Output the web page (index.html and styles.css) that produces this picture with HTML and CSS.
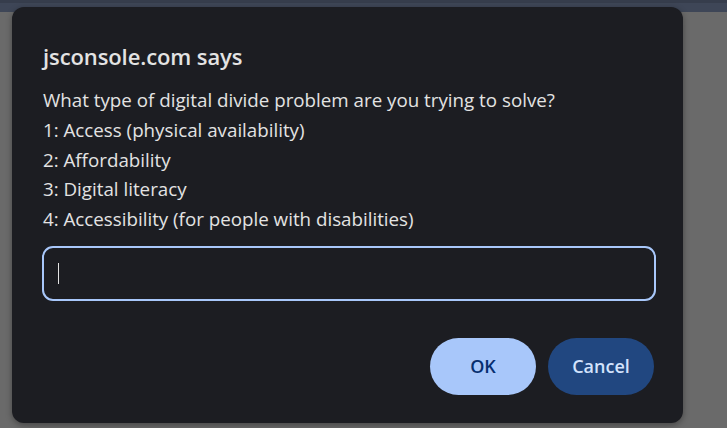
FILE: index.html
```html
<!DOCTYPE html>
<html>
<head>
<meta charset="utf-8">
<link rel="stylesheet" href="styles.css">
</head>
<body>
<div class="topbar"></div>
<div class="stage">
  <div class="dialog">
    <div class="title">jsconsole.com says</div>
    <div class="message">
      <div class="line">What type of digital divide problem are you trying to solve?</div>
      <div class="line">1: Access (physical availability)</div>
      <div class="line">2: Affordability</div>
      <div class="line">3: Digital literacy</div>
      <div class="line">4: Accessibility (for people with disabilities)</div>
    </div>
    <div class="field"><span class="caret"></span></div>
    <div class="actions">
      <button class="btn ok">OK</button>
      <button class="btn cancel">Cancel</button>
    </div>
  </div>
</div>
</body>
</html>
```
FILE: styles.css
```css
html, body {
  margin: 0;
  padding: 0;
}
body {
  width: 727px;
  height: 428px;
  background: #6a6a6a;
  overflow: hidden;
  font-family: "Open Sans", "Noto Sans", sans-serif;
  color: #e3e3e3;
  position: relative;
}
.topbar {
  height: 12px;
  background: #3e4657;
  border-top: 3px solid #363d4c;
  box-sizing: border-box;
}
.stage {
  position: absolute;
  left: 12px;
  top: 7px;
}
.dialog {
  width: 671px;
  height: 416px;
  box-sizing: border-box;
  background: #1c1d22;
  border-radius: 12px;
  box-shadow: 0 2px 6px rgba(0,0,0,0.35);
  padding: 34px 28px 0 31px;
  display: flex;
  flex-direction: column;
}
.title {
  font-size: 22px;
  font-weight: 600;
  line-height: 30px;
  letter-spacing: -0.1px;
}
.message {
  margin-top: 14px;
  font-size: 18.75px;
  line-height: 29.75px;
}
.line {
  height: 29.75px;
}
.field {
  margin-top: 12px;
  margin-left: -1px;
  height: 55px;
  width: 614px;
  box-sizing: border-box;
  border: 2.5px solid #a8c7fa;
  border-radius: 11px;
  display: flex;
  align-items: center;
  padding-left: 14px;
  flex-shrink: 0;
}
.caret {
  display: block;
  width: 1px;
  height: 21px;
  background: #e3e3e3;
}
.actions {
  margin-top: 37px;
  display: flex;
  justify-content: flex-end;
  gap: 12px;
  padding-right: 1px;
}
.btn {
  width: 106px;
  height: 57px;
  border: none;
  border-radius: 29px;
  font-family: "Open Sans", "Noto Sans", sans-serif;
  font-size: 18px;
  font-weight: 600;
  padding: 0;
  flex-shrink: 0;
}
.ok {
  background: #a8c7fa;
  color: #062e6f;
}
.cancel {
  background: #214780;
  color: #d3e3fd;
}
```
